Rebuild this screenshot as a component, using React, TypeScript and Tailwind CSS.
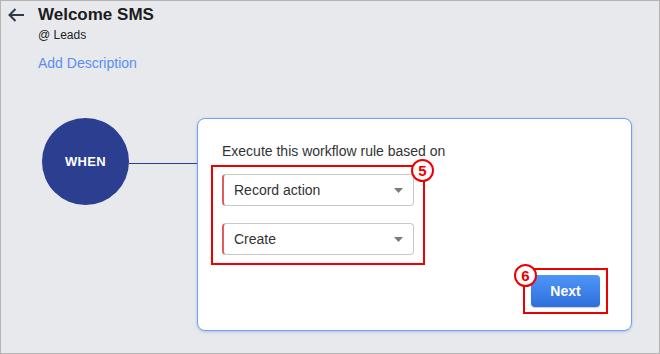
import React from 'react';

const Badge: React.FC<{ n: string; className: string }> = ({ n, className }) => (
  <div
    className={`absolute w-[23px] h-[23px] rounded-full bg-white border-2 border-[#ee0000] flex items-center justify-center text-[15px] font-bold text-[#ee0000] leading-none ${className}`}
  >
    {n}
  </div>
);

const SelectBox: React.FC<{ label: string }> = ({ label }) => (
  <div className="w-[192px] h-[32px] rounded-[4px] border border-[#c8c8c8] border-l-2 border-l-[#e35b5b] bg-white flex items-center justify-between pl-[10px] pr-[10px]">
    <span className="text-[14px] text-[#333333]">{label}</span>
    <svg width="9" height="5" viewBox="0 0 9 5">
      <path d="M0 0 L9 0 L4.5 5 Z" fill="#7a7a7a" />
    </svg>
  </div>
);

const App: React.FC = () => {
  return (
    <div
      className="w-[660px] h-[354px] bg-[#e7e9ed] border border-[#b4b4b4] overflow-hidden"
      style={{ fontFamily: '"Liberation Sans", Arial, sans-serif' }}
    >
      {/* Header */}
      <div className="flex items-start pt-[4px] pl-[7px]">
        <svg width="17" height="14" viewBox="0 0 17 14" className="mt-[3px]">
          <path d="M16 7 H1.5 M7.5 1 L1.5 7 L7.5 13" stroke="#2d3a4a" strokeWidth="2" fill="none" />
        </svg>
        <div className="ml-[13px]">
          <h1 className="text-[17px] leading-[20px] font-bold text-[#1c1c1c]">Welcome SMS</h1>
          <div className="mt-[2px] text-[12px] leading-[16px] text-[#222222]">@ Leads</div>
          <div className="mt-[10px] text-[14px] leading-[20px] text-[#5b8ef0]">Add Description</div>
        </div>
      </div>

      {/* Workflow canvas */}
      <div className="flex items-start mt-[45px] pl-[41px]">
        <div className="w-[87px] h-[87px] rounded-full bg-[#2b3e8f] flex items-center justify-center">
          <span className="text-white font-bold text-[13px] tracking-[0.3px]">WHEN</span>
        </div>
        <div className="w-[68px] h-px bg-[#2b3e8f] mt-[45px]" />

        <div className="w-[435px] h-[213px] bg-white border border-[#6f9ff2] rounded-[8px] shadow-[0_1px_3px_rgba(80,120,200,0.35)] pt-[22px] pl-[24px] flex flex-col">
          <p className="text-[14px] leading-[20px] text-[#333333]">Execute this workflow rule based on</p>

          <div className="relative mt-[4px] -ml-[11px] w-[214px] border-2 border-[#ee0000] pl-[9px] pt-[7px] pb-[8px] flex flex-col gap-[17px]">
            <SelectBox label="Record action" />
            <SelectBox label="Create" />
            <Badge n="5" className="left-[198px] -top-[8px]" />
          </div>

          <div className="flex justify-end mt-[3px] pr-[23px]">
            <div className="relative w-[85px] h-[46px] border-2 border-[#ee0000] pl-[6px] pt-[5px]">
              <button className="w-[69px] h-[32px] rounded-[4px] bg-gradient-to-b from-[#4f96f8] to-[#2f6edc] text-white font-bold text-[14px] shadow-[0_1px_1px_rgba(0,0,0,0.2)]">
                Next
              </button>
              <Badge n="6" className="-left-[11px] -top-[6px]" />
            </div>
          </div>
        </div>
      </div>
    </div>
  );
};

export default App;
